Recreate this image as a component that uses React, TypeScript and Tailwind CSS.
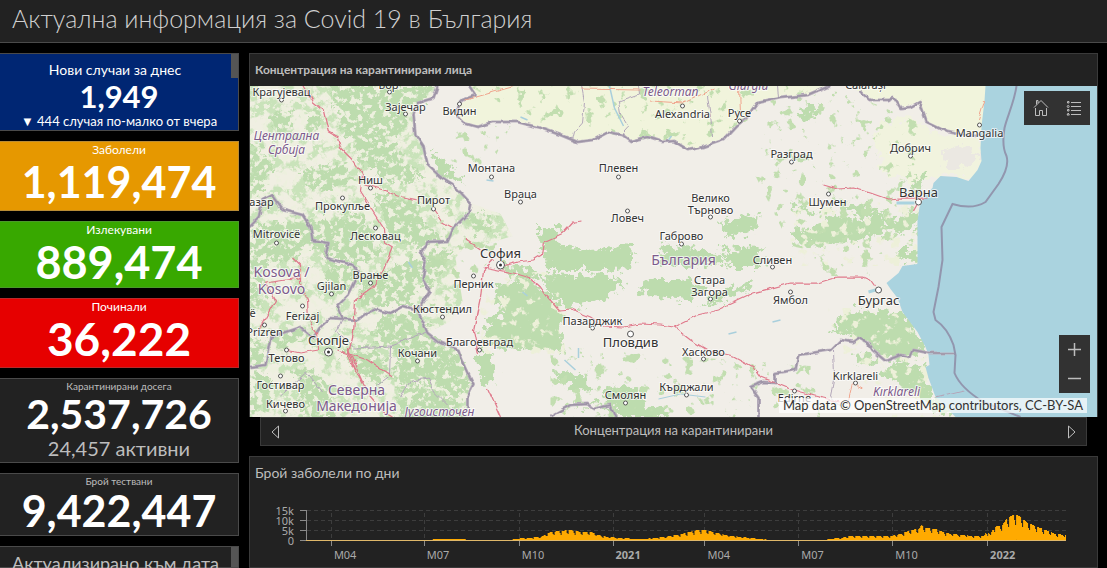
import { useState } from 'react';

type Place = { name: string; x: number; y: number; dot?: [number, number]; kind?: 'city' | 'capital' | 'region' | 'country' };

const places: Place[] = [
    { name: 'Крагујевац', x: 31, y: 10, dot: [31, 14] },
    { name: 'Бор', x: 138, y: 3, dot: [139, 6] },
    { name: 'Зајечар', x: 155, y: 25, dot: [155, 28] },
    { name: 'Видин', x: 209, y: 29, dot: [209, 18] },
    { name: 'Централна', x: 36, y: 54, kind: 'region' },
    { name: 'Србија', x: 36, y: 68, kind: 'region' },
    { name: 'Ниш', x: 120, y: 98, dot: [120, 102] },
    { name: 'Прокупље', x: 92, y: 124, dot: [92, 112] },
    { name: 'Пирот', x: 183, y: 118, dot: [183, 123] },
    { name: 'азар', x: 11, y: 120 },
    { name: 'Лесковац', x: 125, y: 154, dot: [125, 142] },
    { name: 'Mitrovicë', x: 26, y: 152, dot: [26, 157] },
    { name: 'Монтана', x: 241, y: 86, dot: [241, 91] },
    { name: 'Враца', x: 270, y: 112, dot: [270, 116] },
    { name: 'София', x: 250, y: 172, dot: [250, 179], kind: 'capital' },
    { name: 'Teleorman', x: 420, y: 10, kind: 'region' },
    { name: 'Giurgiu', x: 498, y: 4, kind: 'region' },
    { name: 'Alexandria', x: 432, y: 32, dot: [432, 20] },
    { name: 'Русе', x: 489, y: 31, dot: [489, 35] },
    { name: 'Разград', x: 541, y: 72, dot: [541, 76] },
    { name: 'Плевен', x: 368, y: 86, dot: [368, 91] },
    { name: 'Велико', x: 460, y: 116 },
    { name: 'Търново', x: 460, y: 128, dot: [460, 131] },
    { name: 'Ловеч', x: 377, y: 136, dot: [377, 125] },
    { name: 'Габрово', x: 431, y: 154, dot: [431, 158] },
    { name: 'Călărași', x: 615, y: 3 },
    { name: 'Mangalia', x: 729, y: 51, dot: [729, 39] },
    { name: 'Добрич', x: 660, y: 66, dot: [660, 70] },
    { name: 'Варна', x: 668, y: 111, dot: [668, 116], kind: 'city' },
    { name: 'Шумен', x: 577, y: 120, dot: [578, 108] },
    { name: 'Kosova /', x: 31, y: 191, kind: 'country' },
    { name: 'Kosovo', x: 31, y: 208, kind: 'country' },
    { name: 'Врање', x: 120, y: 193, dot: [120, 197] },
    { name: 'Gjilan', x: 81, y: 204, dot: [81, 208] },
    { name: 'Ferizaj', x: 52, y: 234, dot: [52, 220] },
    { name: 'ë', x: 2, y: 231 },
    { name: 'Prizren', x: 14, y: 250, dot: [14, 239] },
    { name: 'Скопје', x: 78, y: 259, dot: [78, 266], kind: 'capital' },
    { name: 'Перник', x: 223, y: 202, dot: [223, 190] },
    { name: 'Кюстендил', x: 192, y: 227, dot: [192, 231] },
    { name: 'Благоевград', x: 229, y: 260, dot: [229, 264] },
    { name: 'Кочани', x: 167, y: 271, dot: [167, 275] },
    { name: 'Тетово', x: 36, y: 276, dot: [36, 264] },
    { name: 'Гостивар', x: 30, y: 303, dot: [30, 290] },
    { name: 'Кичево', x: 35, y: 322, dot: [35, 325] },
    { name: 'Северна', x: 106, y: 309, kind: 'country' },
    { name: 'Македонија', x: 106, y: 325, kind: 'country' },
    { name: 'Југоисточен', x: 189, y: 330, kind: 'region' },
    { name: 'България', x: 433, y: 179, kind: 'country' },
    { name: 'Сливен', x: 522, y: 178, dot: [522, 181] },
    { name: 'Стара', x: 459, y: 198 },
    { name: 'Загора', x: 459, y: 210, dot: [460, 213] },
    { name: 'Ямбол', x: 540, y: 218, dot: [540, 206] },
    { name: 'Пазарджик', x: 342, y: 239, dot: [342, 242] },
    { name: 'Пловдив', x: 380, y: 261, dot: [380, 248], kind: 'city' },
    { name: 'Хасково', x: 453, y: 270, dot: [453, 273] },
    { name: 'Кърджали', x: 436, y: 305, dot: [436, 309] },
    { name: 'Смолян', x: 375, y: 313, dot: [375, 317] },
    { name: 'Edirne', x: 544, y: 316, dot: [544, 305] },
    { name: 'Бургас', x: 628, y: 219, dot: [628, 204], kind: 'city' },
    { name: 'Kırklareli', x: 605, y: 294, dot: [605, 297] },
    { name: 'Kırklareli', x: 646, y: 310, kind: 'region' },
];

const labelStyles = {
    town: 'text-[11px] fill-[#333]',
    city: 'text-[13px] fill-[#333]',
    capital: 'text-[13px] fill-[#333]',
    region: 'text-[12px] italic fill-[#7d5b8c]',
    country: 'text-[14px] fill-[#7d5b8c]',
};

const west = '-1,0 187,0 183,12 167,17 163,29 165,49 173,61 177,79 190,91 203,99 220,117 250,128 262,150 236,158 215,160 205,172 208,190 212,215 200,235 177,247 190,257 208,264 213,277 223,299 217,311 217,331 -1,331';

const forests = [
    '78,0 180,0 176,14 158,18 156,40 140,52 120,42 105,60 92,44 86,20',
    '60,25 70,22 66,44 54,48', '22,30 40,22 38,48 24,46',
    '0,60 10,62 22,80 12,104 0,108', '50,84 90,76 104,92 84,104 56,102',
    '98,48 130,46 156,76 172,92 150,98 128,88 108,72', '182,66 196,76 214,98 204,96 188,88',
    '0,140 60,134 90,130 112,128 124,150 130,170 104,178 78,170 60,158 40,176 0,182',
    '124,106 164,118 176,140 194,152 170,162 140,156 132,130',
    '218,128 240,130 238,146 224,150',
    '110,196 138,184 168,170 174,196 160,216 120,222 108,216', '76,176 104,180 100,200 86,214 72,194',
    '0,184 14,190 10,220 0,226', '0,256 12,252 14,278 0,280', '18,250 48,240 60,250 40,258 20,262',
    '134,228 170,228 188,258 210,268 220,300 210,312 180,300 140,296 150,270 120,250',
    '40,280 62,284 80,300 84,331 52,331 50,306', '0,284 18,290 22,320 0,331', '150,300 190,306 212,320 212,331 150,331',
    '180,166 200,164 196,184 176,200 172,176', '90,264 120,262 140,280 130,300 112,290',
    '245,200 268,192 296,204 312,225 311,264 232,262 232,240 250,228', '250,176 290,186 286,196 258,190',
    '288,142 308,142 309,161 340,164 382,160 383,183 352,184 296,184', '291,188 360,190 374,200 352,214 318,222 300,208',
    '386,204 400,193 430,193 456,203 440,214 396,210', '410,158 432,162 470,168 474,178 412,181',
    '470,136 507,127 506,144 474,151', '471,163 512,161 512,182 480,182', '446,221 476,204 500,194 504,200 466,216',
    '540,118 564,124 566,130 542,124', '542,144 570,140 584,128 612,134 634,128 640,142 618,152 580,160 543,158',
    '584,118 618,120 640,128 612,130', '634,138 664,124 666,140 646,150', '647,164 667,164 667,178 649,176',
    '580,241 600,224 652,226 677,264 660,270 637,274 617,257 603,251', '603,268 630,272 622,280 606,276',
    '630,284 650,274 673,281 685,311 703,329 693,331 660,306 646,297',
    '303,284 320,287 337,289 338,304 327,307 307,292', '357,300 381,302 400,321 418,322 418,331 364,331 360,319 320,320 330,318 356,314',
    '224,268 240,268 246,296 236,300 228,286', '664,92 676,88 670,100 660,104', '548,22 566,20 564,34 552,32',
];

const borders = [
    'M218-1 225 9 213 14 208 19 207 31 213 37 227 41 243 36 267 36 290 42 310 49 327 56 343 54 358 46 372 49 380 55 397 51 412 56 423 55 438 64 453 61 473 54 487 39 497 31 507 17 530 12 557 9 580-1',
    'M610 5 620 14 638 14 643 11 650 22 660 21 669 16 676 36 697 46 707 48 731 49',
    'M187 0 183 12 167 17 163 29 165 49 173 61 177 79 190 91 203 99 220 117 218 127 203 142 197 156 177 157 170 166 175 177 172 192 180 206 167 224 177 247 190 257 208 264 213 277 223 299 217 311 217 322',
    'M167 224 153 220 140 227 122 223 107 234 80 232 70 241 63 252 50 241 20 251 15 279 -1 281',
    'M-1 141 8 132 12 114 22 109 33 124 52 129 60 141 62 154 78 157 75 172 103 179 108 187 97 209 87 219 92 232',
    'M300 330 320 319 337 318 343 323 360 319 365 331',
    'M508 331 508 312 500 301 513 296 525 297 525 287 545 284 548 269 580 264 590 254 602 256 608 252 617 257 622 264 635 275 650 269 659 271 662 264 677 267 705 267',
];

const roads = [
    'M53-1 63 16 73 24 78 46 87 51 90 62 102 74 112 89 110 106 120 122 133 142 134 156 142 161 133 184 123 201 105 214 103 247 97 271 108 291 117 307 133 326 142 331',
    'M115 99 133 104 147 110 167 114M183 123 192 136 203 142M215 153 230 163',
    'M233 181 263 187 280 192 290 201 297 211 308 224 320 223 340 231 353 240 373 241 390 238 410 239 423 241 440 254 457 264 483 270 503 281 510 291 537 302 550 306 573 312 590 316',
    'M423 241 447 229 467 224 503 207 540 197 567 197 587 191 613 191 620 194 625 201',
    'M250 181 267 176 283 174 291 169 293 156 313 147 323 136 332 135',
    'M243 174 233 184 230 211 223 244 228 269M237 302 250 331',
    'M573 99 587 103 603 102 620 107 637 113 650 112 677 112M663 125 668 116',
    'M42 171 50 179 50 197 57 214 58 234 67 247 68 264 50 267 35 264M87 264 117 274 142 291M15 197 25 214 7 246M50 179 49 192 15 197',
    'M97 262 112 296 105 286 98 268',
];

const minorBorders = [
    'M331 0 334 16 332 37 324 46 322 54M387 0 388 8 368 15 370 28 378 41 370 50M457 10 460 30 462 50M527 0 528 12',
    'M92 232 86 246 104 262 140 260 176 246M140 260 139 290 126 300M150 311 160 295 178 292 184 306 196 318M30 310 56 286 66 298 72 306',
    'M583 264 584 290 580 310 590 320M685 311 713 304',
];

function BasemapDrawing() {
    return (
        <svg
            className="block h-full w-full font-['Noto_Sans','Open_Sans',sans-serif]"
            viewBox="-1 0 848 331"
            preserveAspectRatio="xMidYMid slice"
            role="img"
            aria-label="Карта на България"
        >
            <defs>
                <filter id="rough" x="-5%" y="-5%" width="110%" height="110%">
                    <feTurbulence type="fractalNoise" baseFrequency="0.14" numOctaves="4" seed="4" result="n" />
                    <feDisplacementMap in="SourceGraphic" in2="n" scale="20" xChannelSelector="R" yChannelSelector="G" />
                </filter>
                <filter id="wobble">
                    <feTurbulence type="fractalNoise" baseFrequency="0.1" numOctaves="2" seed="9" result="n" />
                    <feDisplacementMap in="SourceGraphic" in2="n" scale="5" xChannelSelector="R" yChannelSelector="G" />
                </filter>
                {/* Speckled woodland: noise cut to a hard edge */}
                <filter id="woods" x="0" y="0" width="100%" height="100%" colorInterpolationFilters="sRGB">
                    <feTurbulence type="fractalNoise" baseFrequency="0.07" numOctaves="5" seed="11" />
                    <feColorMatrix values="0 0 0 0 0.79  0 0 0 0 0.89  0 0 0 0 0.73  8 0 0 0 -3.7" />
                    <feComposite in2="SourceGraphic" operator="in" />
                </filter>
                <filter id="clearings" x="0" y="0" width="100%" height="100%" colorInterpolationFilters="sRGB">
                    <feTurbulence type="fractalNoise" baseFrequency="0.16" numOctaves="4" seed="23" />
                    <feColorMatrix values="0 0 0 0 0.93  0 0 0 0 0.94  0 0 0 0 0.87  0 9 0 0 -4.8" />
                    <feComposite in2="SourceGraphic" operator="in" />
                </filter>
                {/* Finer gaps inside the Bulgarian mountain forests */}
                <filter id="gaps" x="0" y="0" width="100%" height="100%" colorInterpolationFilters="sRGB">
                    <feTurbulence type="fractalNoise" baseFrequency="0.1" numOctaves="4" seed="17" />
                    <feColorMatrix values="0 0 0 0 0.93  0 0 0 0 0.94  0 0 0 0 0.85  0 10 0 0 -5.9" />
                    <feComposite in2="SourceGraphic" operator="in" />
                </filter>
                <filter id="groves" x="0" y="0" width="100%" height="100%" colorInterpolationFilters="sRGB">
                    <feTurbulence type="fractalNoise" baseFrequency="0.09" numOctaves="4" seed="31" />
                    <feColorMatrix values="0 0 0 0 0.76  0 0 0 0 0.87  0 0 0 0 0.69  14 0 0 0 -8.6" />
                    <feComposite in2="SourceGraphic" operator="in" />
                </filter>
            </defs>

            <rect x="-1" width="849" height="331" fill="#f1eee8" />
            <path d="M218-1 225 9 208 19 207 31 213 37 227 41 243 36 267 36 290 42 310 49 327 56 343 54 358 46 372 49 380 55 397 51 412 56 423 55 438 64 453 61 473 54 487 39 497 31 507 17 530 12 557 9 580-1Z" fill="#f1f4dc" />
            <path d="M600 0 620 14 638 14 643 11 650 22 669 16 676 36 697 46 731 49 740 0Z" fill="#f1f4dc" />
            <path d="M625 40 660 30 690 50 731 52 731 75 718 95 690 90 660 98 630 84Z" fill="#f1f3de" filter="url(#rough)" />
            <path d="M690 64 712 58 730 66 722 80 696 82Z" fill="#ebe8e2" filter="url(#rough)" />
            <polygon points={west} fill="#f0efe2" />
            <polygon points={west} filter="url(#woods)" />
            <g fill="#bddcae" filter="url(#rough)">
                {forests.map((points) => <polygon key={points} points={points} />)}
            </g>
            <polygon points={west} filter="url(#clearings)" />
            <path d="M232 186 300 186 316 225 314 268 228 268ZM578 222 655 222 705 331 640 331 580 250ZM540 116 668 116 668 180 540 180Z" filter="url(#gaps)" />
            <path d="M520 14 580 4 620 16 676 40 670 90 667 160 640 180 540 160 505 90ZM207 40 260 40 240 80 200 76ZM218 0 580 0 438 60 290 38ZM300 260 560 280 570 331 300 331ZM560 160 640 164 620 190 570 190ZM190 120 250 130 245 170 180 230 176 160Z" filter="url(#groves)" />

            {/* Lakes and rivers */}
            <g fill="none" stroke="#a9cfdc" strokeWidth="1.5">
                <path d="M359 0 364 22 373 40M236 94 243 95M314 274 325 284M522 236 530 234M478 248 486 246M328 262 328 272M418 54 421 50M158 176 162 182M272 206 277 210M270 31 277 34" />
                <path d="M408 313 430 308 455 311" strokeWidth="1" />
            </g>

            <path d="M735 0 734 15 731 40 730 62 731 75 727 84 718 95 706 91 690 90 683 97 682 102 675 108 669 121 667 135 667 178 652 180 648 187 636 197 640 203 647 212 652 226 667 246 675 261 678 269 679 279 675 281 678 292 685 311 703 329 706 332 849 332 849-1Z" fill="#aad3df" />
            <path d="M618 206 625 204M646 117 664 117" stroke="#aad3df" strokeWidth="3" />

            <g fill="none" strokeLinejoin="round" filter="url(#wobble)">
                <g stroke="#b3a7ba" strokeWidth="1">
                    {minorBorders.map((d) => <path key={d} d={d} />)}
                </g>
                <g stroke="#bbb1bf" strokeWidth="3">
                    {borders.map((d) => <path key={d} d={d} />)}
                </g>
                <g stroke="#9d94a6" strokeWidth="1.5">
                    {borders.map((d) => <path key={d} d={d} />)}
                </g>
                <g stroke="#e07a8c" strokeWidth="1.25">
                    {roads.map((d) => <path key={d} d={d} />)}
                </g>
                <path d="M331 3 389 4M400 15 432 17 465 2M489 0 490 30M215 14 265 0M734 14 728 34M597 318 602 297 612 302" stroke="#f0a58e" />
            </g>
            <path
                d="M766 0C764 16 756 32 754 42 752 54 753 64 756 70 759 80 752 92 748 98L735 116Q722 124 702 118L691 141 692 174 688 201 683 226 685 234Q697 242 703 259L705 269 704 287Q710 302 733 316L770 331"
                fill="none" stroke="#9296ae" strokeWidth="2"
            />

            {/* Settlement marks */}
            {places.map(({ name, dot, kind }) => dot && (
                <g key={name} fill="#fff" stroke="#555">
                    <circle cx={dot[0]} cy={dot[1]} r={kind === 'capital' ? 4 : kind === 'city' ? 3 : 2} />
                    {kind === 'capital' && <circle cx={dot[0]} cy={dot[1]} r="1.5" fill="#333" stroke="none" />}
                </g>
            ))}
            <g textAnchor="middle" stroke="#fff" strokeOpacity="0.7" strokeWidth="2" strokeLinejoin="round" paintOrder="stroke">
                {places.map(({ name, x, y, kind }) => (
                    <text key={name + x} x={x} y={y} className={labelStyles[kind ?? 'town']}>{name}</text>
                ))}
            </g>
        </svg>
    );
}

// [x, height] points of the daily case curve
const curve = [
    [305, 0], [430, 0], [433, 1], [463, 1], [466, 0], [509, 0], [512, 1], [526, 2], [540, 3], [550, 8], [560, 9], [568, 10],
    [580, 8], [590, 8], [597, 5], [607, 3], [620, 2], [640, 1], [655, 2], [670, 4], [685, 7], [697, 10], [705, 10], [712, 8],
    [725, 5], [740, 3], [760, 1], [770, 0], [825, 0], [828, 1], [840, 2], [850, 4], [890, 4], [900, 6], [910, 10], [918, 11],
    [921, 15], [925, 12], [935, 11], [945, 7], [960, 5], [975, 4], [983, 4], [986, 8], [990, 5], [993, 13], [1002, 15],
    [1006, 21], [1014, 26], [1020, 23], [1027, 17], [1035, 14], [1045, 10], [1055, 6], [1066, 5],
];

function caseBars() {
    let d = '';
    for (let x = 305; x < 1066; x++) {
        const i = curve.findIndex(([px]) => px > x);
        const [x0, h0] = curve[i - 1];
        const [x1, h1] = curve[i];
        const top = h0 + ((h1 - h0) * (x - x0)) / (x1 - x0);
        const weekend = x % 7 === 0 ? 0.6 : x % 7 === 6 ? 0.75 : 1;
        const h = Math.round(top * weekend);
        if (h > 0) d += `M${x - 249} ${51 - h}h1v${h}h-1z`;
    }
    return d;
}

const months = [
    { label: 'M04', x: 81 }, { label: 'M07', x: 174 }, { label: 'M10', x: 269 }, { label: '2021', x: 363 },
    { label: 'M04', x: 455 }, { label: 'M07', x: 549 }, { label: 'M10', x: 643 }, { label: '2022', x: 738 },
];

function CasesChart() {
    return (
        <svg className="block w-full font-['Noto_Sans','Open_Sans',sans-serif] text-[11px]" viewBox="0 0 848 78" role="img" aria-label="Брой заболели по дни">
            <g stroke="#3d3d3d" strokeDasharray="4 3" shapeRendering="crispEdges">
                <path d="M57 21.5H817M57 31.5H817M57 41.5H817" />
                {months.map(({ x }) => <path key={x} d={`M${x}.5 24V50`} />)}
            </g>
            <g stroke="#8a8a8a" shapeRendering="crispEdges" fill="none">
                <path d="M50 21.5H56M50 31.5H56M50 41.5H56M50 51.5H56M56.5 21V51" />
                {months.map(({ x }) => <path key={x} d={`M${x}.5 52V57`} />)}
            </g>
            <path d={caseBars()} fill="#ffaa00" />
            <path d="M56 51.5H817" stroke="#e0b86a" shapeRendering="crispEdges" />
            <g fill="#aaa" textAnchor="end">
                <text x="44" y="26">15k</text>
                <text x="44" y="36">10k</text>
                <text x="44" y="46">5k</text>
                <text x="44" y="56">0</text>
            </g>
            <g fill="#aaa">
                {months.map(({ label, x }) => (
                    <text key={x} x={x + 3} y="70" className={label.startsWith('20') ? 'font-bold' : ''}>{label}</text>
                ))}
            </g>
        </svg>
    );
}

export default function App() {
    const [zoom, setZoom] = useState(0);
    const scale = 1 + zoom * 0.25;

    return (
        <div className="flex h-screen flex-col overflow-hidden bg-black font-['Lato','Open_Sans',sans-serif] text-[#bdbdbd]">
            <header className="shrink-0 border-b border-[#4a4a4a] bg-[#222] px-3 pb-1.5">
                <h1 className="text-[25px] leading-9 font-light text-[#d0d0d0]">Актуална информация за Covid 19 в България</h1>
            </header>

            <div className="flex min-h-0 flex-1 gap-2.5 pt-2.5 pr-[9px]">
                {/* Left - Indicators */}
                <aside className="flex w-[239px] shrink-0 flex-col gap-2.5 text-center whitespace-nowrap">
                    <section className="relative border border-l-0 border-[#4a4a4a] bg-[#002673] pt-1.5 pr-2 text-white">
                        <h2 className="text-[14px] leading-5">Нови случаи за днес</h2>
                        <p className="pl-2 text-[31px] leading-8 font-bold">1,949</p>
                        <p className="pl-2 text-[13px] leading-[18px]">▼ 444 случая по-малко от вчера</p>
                        <div className="absolute top-0 right-0 h-6 w-[7px] bg-[#555]" />
                    </section>
                    <section className="border border-l-0 border-[#b98c35] bg-[#e69800] pb-1 text-white">
                        <h2 className="text-[12px] leading-4">Заболели</h2>
                        <p className="text-[43px] leading-[48px] font-bold">1,119,474</p>
                    </section>
                    <section className="border border-l-0 border-[#4b9a2a] bg-[#38a800] pb-px text-white">
                        <h2 className="text-[12px] leading-4">Излекувани</h2>
                        <p className="text-[45px] leading-[48px] font-bold">889,474</p>
                    </section>
                    <section className="border border-l-0 border-[#b92a2a] bg-[#e60000] pb-1 text-white">
                        <h2 className="text-[12px] leading-4">Починали</h2>
                        <p className="text-[46px] leading-[48px] font-bold">36,222</p>
                    </section>
                    <section className="border border-l-0 border-[#4a4a4a] bg-[#222]">
                        <h2 className="text-[10px] leading-[14px]">Карантинирани досега</h2>
                        <p className="text-[41px] leading-[42px] font-bold text-white">2,537,726</p>
                        <p className="text-[20px] leading-[27px]">24,457 активни</p>
                    </section>
                    <section className="border border-l-0 border-[#4a4a4a] bg-[#222] pb-px">
                        <h2 className="text-[10px] leading-[14px]">Брой тествани</h2>
                        <p className="text-[43px] leading-[46px] font-bold text-white">9,422,447</p>
                    </section>
                    <section className="flex min-h-0 flex-1 border border-l-0 border-[#4a4a4a] bg-[#222]">
                        <h2 className="flex-1 pt-1 text-[18px] leading-6">Актуализирано към дата</h2>
                        <div className="w-[7px] bg-[#555]" />
                    </section>
                </aside>

                {/* Right - Map and chart */}
                <main className="flex min-w-0 flex-1 flex-col">
                    <section className="border border-[#3a3a3a] border-b-0 bg-[#222]">
                        <h2 className="px-[5px] text-[12px] leading-8 font-bold">Концентрация на карантинирани лица</h2>
                        <div className="relative h-[331px] overflow-hidden">
                            <div className="h-full" style={{ transform: `scale(${scale})` }}>
                                <BasemapDrawing />
                            </div>
                            <div className="absolute top-[5px] right-[7px] flex h-[34px] w-[66px] bg-[#323232] text-[#bdbdbd]">
                                <button type="button" aria-label="Начало" className="flex flex-1 items-center justify-center" onClick={() => setZoom(0)}>
                                    <svg className="h-[18px] w-4" viewBox="0 0 16 18" fill="none" stroke="currentColor">
                                        <path d="M2.5 9v7.500h4v-5h3v5h4V9M1 8.500 8 1.500l7 7M3.500 5.500v-4h1.500v2.500" />
                                    </svg>
                                </button>
                                <button type="button" aria-label="Легенда" className="flex flex-1 items-center justify-center">
                                    <svg className="h-4 w-4" viewBox="0 0 16 16" fill="none" stroke="currentColor">
                                        <path d="M5 2.500h10M5 6.500h10M5 10.500h10M5 14.500h10M1.500 1.500h1.500v1.500H1.500zM1.500 9.500h1.500v1.500H1.500zM1 15l1.200-2 1.200 2z" />
                                        <circle cx="2.200" cy="6.500" r="1" />
                                    </svg>
                                </button>
                            </div>
                            <div className="absolute right-[7px] bottom-6 flex h-[58px] w-[31px] flex-col bg-[#323232] text-[#bdbdbd]">
                                <button type="button" aria-label="Увеличи" className="flex flex-1 items-center justify-center" onClick={() => setZoom(Math.min(zoom + 1, 8))}>
                                    <svg className="h-[13px] w-[13px]" viewBox="0 0 13 13" stroke="currentColor" strokeWidth="1.500"><path d="M0 6.500h13M6.500 0v13" /></svg>
                                </button>
                                <button type="button" aria-label="Намали" className="flex flex-1 items-center justify-center" onClick={() => setZoom(Math.max(zoom - 1, 0))}>
                                    <svg className="h-[13px] w-[13px]" viewBox="0 0 13 13" stroke="currentColor" strokeWidth="1.500"><path d="M0 6.500h13" /></svg>
                                </button>
                            </div>
                            <p className="absolute right-2.5 bottom-1 bg-white/70 px-1 text-[13px] leading-[15px] text-[#323232]">
                                Map data © OpenStreetMap contributors, CC-BY-SA
                            </p>
                        </div>
                    </section>

                    <nav className="mx-[11px] flex items-center justify-between border border-[#3a3a3a] bg-[#222] px-2.5">
                        <button type="button" aria-label="Предишна">
                            <svg className="h-3.5 w-2" viewBox="0 0 8 14" fill="none" stroke="currentColor"><path d="M7.500 1v12L1 7z" /></svg>
                        </button>
                        <span className="pb-0.5 text-[13px] leading-[25px]">Концентрация на карантинирани</span>
                        <button type="button" aria-label="Следваща">
                            <svg className="h-3.5 w-2" viewBox="0 0 8 14" fill="none" stroke="currentColor"><path d="M.500 1v12L7 7z" /></svg>
                        </button>
                    </nav>

                    <section className="mt-2.5 min-h-0 flex-1 overflow-hidden border border-[#3a3a3a] bg-[#222]">
                        <h2 className="px-[5px] text-[14px] leading-8">Брой заболели по дни</h2>
                        <CasesChart />
                    </section>
                </main>
            </div>
        </div>
    );
}
